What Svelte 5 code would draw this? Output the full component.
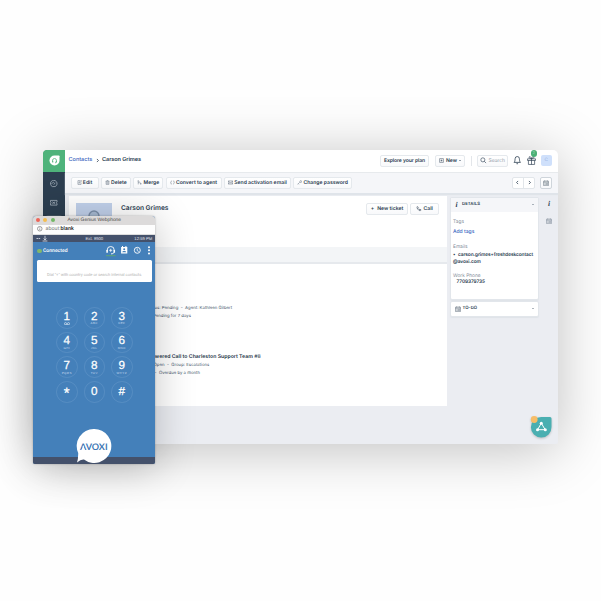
<script>
  const actions = [
    { label: 'Edit', icon: 'edit', w: 28 },
    { label: 'Delete', icon: 'trash', w: 30.5 },
    { label: 'Merge', icon: 'merge', w: 30 },
    { label: 'Convert to agent', icon: 'convert', w: 56 },
    { label: 'Send activation email', icon: 'mail', w: 67.5 },
    { label: 'Change password', icon: 'key', w: 58.5 }
  ];
  const keys = [
    ['1', ''], ['2', 'ABC'], ['3', 'DEF'],
    ['4', 'GHI'], ['5', 'JKL'], ['6', 'MNO'],
    ['7', 'PQRS'], ['8', 'TUV'], ['9', 'WXYZ'],
    ['*', null], ['0', null], ['#', null]
  ];
  const paths = {
    edit: 'M10 2H3v12h10V8 M6 10l1-3 6-6 2 2-6 6z',
    trash: 'M2 4h12 M6 4V2h4v2 M3.5 4v10h9V4 M6.5 7v5 M9.5 7v5',
    merge: 'M4 14V2 M2 4l2-2 2 2 M4 8c0-2 8-2 8 5 M10 11l2 3 2-3',
    convert: 'M6 2.5A6 6 0 0 0 5 13l-2 1 M10 13.5A6 6 0 0 0 11 3l2-1',
    mail: 'M1 3h14v10H1z M1 4l7 5 7-5 M1 13l5-5 M15 13l-5-5',
    key: 'M2 14l7-7 M4 12l2 2 M9 5a3 3 0 1 1 3 3 3 3 0 0 1-3-3',
    plusbox: 'M2 2h12v12H2z M8 5v6 M5 8h6',
    search: 'M12 7a5 5 0 1 1-10 0 5 5 0 0 1 10 0z M10.5 10.5L15 15',
    bell: 'M2 12h12c-2-2-1.500-4-2-7a4 4 0 0 0-8 0c-.5 3 0 5-2 7z M6.5 14.5h3',
    gift: 'M1 5h14v3H1z M2.5 8v7h11V8 M8 5v10 M8 5C3 5 3 1 5 1s3 4 3 4 1-4 3-4 2 4-3 4',
    phone: 'M3 2c-2 3 4 12 9 12l2-2-3-3-2 1.5L5.5 7 7 5 5 2z M10 11h5',
    cal: 'M1.5 3h13v12h-13z M1.5 6h13 M4.5 1v3 M11.5 1v3 M4 9h3 M9 9h3 M4 12h3 M9 9v3h3V9',
    gauge: 'M5 14A7 7 0 1 1 11 14z M8 10l3-4 M4 9a4 4 0 0 1 5-4',
    ticket: 'M1 3h14v3.5a1.5 1.5 0 0 0 0 3V13H1V9.5a1.5 1.5 0 0 0 0-3z M5 6l6 4 M11 6l-6 4',
    left: 'M10 3L5 8l5 5',
    right: 'M6 3l5 5-5 5'
  };
</script>

{#snippet icon(name, size, sw = 1.5)}
  <svg class="ic" width={size} height={size} viewBox="0 0 16 16" fill="none" stroke="currentColor" stroke-width={sw}>
    <path d={paths[name]} />
  </svg>
{/snippet}

<div class="stage">
  <section class="desk">
    <nav class="rail">
      <div class="brand">
        <svg width="11" height="11" viewBox="0 0 22 22">
          <path d="M11 1h8.5a1.5 1.5 0 0 1 1.5 1.5V11A10 10 0 1 1 11 1z" fill="#fff" />
          <path d="M7 13.5v-2.500a4 4 0 0 1 8 0v2.500M14.500 14.500l-2.500 1.500" fill="none" stroke="#4fb37b" stroke-width="1.5" />
          <path d="M7.500 11.500v3.500M14.500 11.500v3.500" stroke="#4fb37b" stroke-width="2" />
        </svg>
      </div>
      <div class="railicons">
        {@render icon('gauge', 7.5, 1.7)}
        {@render icon('ticket', 7.5, 1.7)}
        <div class="active"></div>
      </div>
    </nav>

    <div class="page">
      <header class="top">
        <span class="crumb">Contacts</span>
        <span class="sep">{@render icon('right', 5, 2.5)}</span>
        <span class="current">Carson Grimes</span>
        <div class="tools">
          <div class="btn explore"><span>Explore your plan</span></div>
          <div class="btn new">{@render icon('plusbox', 5)}<span>New</span><i class="caret"></i></div>
          <div class="vline"></div>
          <div class="btn search">{@render icon('search', 6.5)}<span>Search</span></div>
          <div class="bell">{@render icon('bell', 8.5, 1.5)}</div>
          <div class="gift">{@render icon('gift', 9, 1.2)}<b>2</b></div>
          <div class="me">C</div>
        </div>
      </header>

      <div class="bar">
        {#each actions as a}
          <div class="btn act" style="width:{a.w}px">{@render icon(a.icon, 5)}<span>{a.label}</span></div>
        {/each}
        <div class="pager"><div>{@render icon('left', 5, 2.5)}</div><div>{@render icon('right', 5, 2.5)}</div></div>
        <div class="btn calbtn">{@render icon('cal', 6)}</div>
      </div>

      <div class="body">
        <main>
          <div class="profile">
            <div class="photo"><svg width="12" height="12" viewBox="0 0 12 12"><circle cx="6" cy="6" r="5" fill="#a9bcd5" stroke="#7b8fa9" stroke-width="1.4" /></svg></div>
            <h1>Carson Grimes</h1>
            <div class="btn ticket"><span class="plus">+</span><span>New ticket</span></div>
            <div class="btn call">{@render icon('phone', 5.5)}<span>Call</span></div>
          </div>
          <div class="tabs"></div>
          <div class="feed">
            <p class="l1">tus: Pending&nbsp; - &nbsp;Agent: Kathleen Gilbert</p>
            <p class="l2">Pending for 7 days</p>
            <p class="l3">swered Call to Charleston Support Team <span>#8</span></p>
            <p class="l4">Open&nbsp; - &nbsp;Group: Escalations</p>
            <p class="l5">-&nbsp; Overdue by a month</p>
          </div>
        </main>
        <aside>
          <div class="card">
            <div class="head"><i class="info">i</i><span>DETAILS</span><div class="up"></div></div>
            <div class="fields">
              <p class="lab tags">Tags</p>
              <p class="add">Add tags</p>
              <p class="lab em">Emails</p>
              <p class="mail"><span class="dot">•</span><span>carson.grimes+freshdeskcontact</span></p>
              <p class="mail m2">@avoxi.com</p>
              <p class="lab wp">Work Phone</p>
              <p class="num">7709379735</p>
            </div>
          </div>
          <div class="card todo">
            {@render icon('cal', 6)}<span>TO-DO</span><div class="up down"></div>
          </div>
        </aside>
        <div class="dock"><i class="info">i</i>{@render icon('cal', 6)}</div>
      </div>
    </div>

    <div class="fab">
      <svg width="23" height="23" viewBox="0 0 23 23">
        <path d="M11.5 2H20a1.5 1.5 0 0 1 1.5 1.5V12A10.3 10.3 0 1 1 11.5 2z" fill="#4aafb1" />
        <path d="M11.3 8.2L7.6 14.7h7.6z" fill="none" stroke="#fff" stroke-width="1" />
        <circle cx="11.3" cy="8.2" r="1.5" fill="#fff" /><circle cx="7.5" cy="14.7" r="1.5" fill="#fff" /><circle cx="15.3" cy="14.7" r="1.5" fill="#fff" />
        <circle cx="4.2" cy="4.5" r="3.4" fill="#f7bd68" />
      </svg>
    </div>
  </section>

  <section class="phone">
    <div class="title"><i style="background:#ed6559"></i><i style="background:#f4bd50"></i><i style="background:#73b766"></i><span>Avoxi Genius Webphone</span></div>
    <div class="url">
      <svg width="5.5" height="5.5" viewBox="0 0 12 12" fill="none" stroke="#555" stroke-width="1.2"><circle cx="6" cy="6" r="5" /><path d="M6 3v1.2M6 5.2v4" /></svg>
      <span>about:<b>blank</b></span>
    </div>
    <div class="status">
      <svg width="14" height="7" viewBox="0 0 14 7" fill="none" stroke="#dfe5ee" stroke-width="0.8"><path d="M0.5 3.5h4" stroke-dasharray="1.6 .5" /><path d="M9 0.8v4M7.6 3.5L9 5l1.4-1.5M6.6 6h4.8" /></svg>
      <span class="ext">Ext. 8900</span><span class="time">12:59 PM</span>
    </div>
    <div class="conn">
      <i class="led"></i><span>Connected</span>
      <svg width="44" height="12" viewBox="0 0 44 12" fill="none" stroke="#fff" stroke-width="1">
        <path d="M1.2 6.3V5a3.5 3.5 0 0 1 7 0v1.3M8 7.500q-.8 1.400-3 1.400" stroke-width=".9" />
        <path d="M1.1 5v2.700M8.300 5v2.700" stroke-width="1.5" /><path d="M4.700 3.800v3M3.200 5.300h3" stroke-width=".8" />
        <path d="M0 10.7h9.600" stroke="#67ae62" stroke-width=".8" />
        <path d="M15.1 2h6.200v6.500h-6.200z" fill="#fff" stroke="none" /><path d="M16.500 1v2M19.900 1v2" /><circle cx="18.2" cy="4.2" r="1" fill="#4480ba" stroke="none" /><path d="M16.2 7.300c0-1.900 4-1.900 4 0z" fill="#4480ba" stroke="none" />
        <circle cx="31.3" cy="5.3" r="3" stroke-width=".9" /><path d="M31.2 3.400v2.200l1.500 .9" stroke-width=".8" />
        <g fill="#fff" stroke="none"><circle cx="43" cy="2.200" r="1" /><circle cx="43" cy="5.300" r="1" /><circle cx="43" cy="8.400" r="1" /></g>
      </svg>
    </div>
    <div class="dial">Dial "+" with country code or search internal contacts</div>
    <div class="pad">
      {#each keys as [n, t]}
        <div class="key" class:solo={t === null}>
          <strong class:star={n === '*'}>{n}</strong>
          {#if t}<small>{t}</small>{/if}
          {#if t === ''}<svg width="6" height="3.6" viewBox="0 0 6 3.6" fill="none" stroke="#dce8f4" stroke-width=".7"><circle cx="1.5" cy="1.7" r="1.1" /><circle cx="4.5" cy="1.7" r="1.1" /><path d="M1.5 2.9h3" /></svg>{/if}
        </div>
      {/each}
    </div>
    <div class="foot">
      <svg class="bubble" width="36" height="36" viewBox="0 0 36 36">
        <path d="M18 1A17 17 0 1 1 8 31.5Q5 31 1 34.5Q2.300 31 2.200 25A17 17 0 0 1 18 1z" fill="#fff" />
        <text x="4" y="21.600" textLength="27.6" lengthAdjust="spacingAndGlyphs" font-size="9" font-weight="700" fill="#3d76b4">AVOXI</text>
        <path d="M5.700 21.800L7.300 17.300 8.900 21.800z" fill="#fff" />
      </svg>
    </div>
  </section>
</div>

<style>
  :global(body) { background: #fefefe; overflow: hidden; }
  * { box-sizing: border-box; }
  p, h1 { margin: 0; }
  .stage { position: relative; width: 601px; height: 601px; overflow: hidden; background: #fefefe; font-family: Inter, "Liberation Sans", sans-serif; color: #2b3d51; font-size: 5.3px; line-height: 1; white-space: nowrap; text-rendering: geometricPrecision; }
  .ic { display: block; flex: none; }
  .desk { position: absolute; left: 43px; top: 150px; width: 515px; height: 294px; display: flex; border-radius: 5px 5px 2px 2px; background: #ebedf2; box-shadow: 0 6px 56px rgba(0,0,0,.25); }
  .rail { width: 22px; background: #2c3e50; border-radius: 5px 0 0 2px; }
  .brand { height: 22px; background: #4fb37b; border-radius: 4px 0 0 0; display: flex; align-items: center; justify-content: center; padding-bottom: 1.5px; }
  .railicons { display: flex; flex-direction: column; align-items: center; padding-top: 8px; color: #a3afba; gap: 11.5px; }
  .active { width: 16px; height: 12px; margin-top: -3.5px; background: #475868; border-radius: 2px; }
  .page { flex: 1; display: flex; flex-direction: column; }
  .top { height: 22px; background: #fff; border-radius: 0 5px 0 0; display: flex; align-items: center; padding: 0 6px 1px 3.5px; font-size: 5.6px; font-weight: 600; }
  .crumb { color: #3c67c0; width: 24px; letter-spacing: -.05px; font-weight: 500; }
  .sep { width: 9.5px; padding-left: 2.5px; }
  .current { letter-spacing: -.1px; }
  .tools { margin-left: auto; display: flex; align-items: center; }
  .btn { display: flex; align-items: center; justify-content: center; gap: 1px; height: 12px; background: linear-gradient(#fff, #f8f9fb); border: 1px solid #e5e9ed; border-radius: 2px; font-size: 5.1px; font-weight: 600; flex: none; }
  .btn span { padding-top: 1.5px; }
  .explore { width: 49px; letter-spacing: -.1px; }
  .new { width: 30px; margin-left: 6px; gap: 2px; }
  .caret { border: 1.2px solid transparent; border-top: 1.6px solid #34475a; border-bottom: 0; }
  .vline { width: 1px; height: 10px; background: #e3e6ea; margin-left: 6px; }
  .search { width: 31px; margin-left: 5px; gap: 2px; font-weight: 400; }
  .search span { color: #97a1ad; letter-spacing: -.1px; }
  .bell { margin-left: 5.3px; }
  .gift { position: relative; margin-left: 4.7px; }
  .gift b { position: absolute; left: 4px; top: -6px; width: 6.5px; height: 6.5px; border-radius: 50%; background: #4cb077; color: #8fd0ab; font-size: 4px; line-height: 6.5px; text-align: center; font-weight: 400; }
  .me { width: 11.5px; height: 11.5px; margin-left: 5px; border-radius: 2px; background: #cfe0fb; color: #8fabdc; font-size: 4.5px; font-weight: 400; display: flex; align-items: center; justify-content: center; padding-top: 1px; }
  .bar { height: 21.5px; background: #f5f6f9; border-top: 1px solid #e7eaed; border-bottom: 1px solid #dfe4ea; box-shadow: 0 1px 1px #e0e4e9; display: flex; align-items: center; gap: 2.2px; padding: 0 6px 0 5.5px; }
  .act .ic { opacity: .8; }
  .pager { margin-left: auto; display: flex; width: 23.5px; height: 12px; background: #fff; border: 1px solid #e2e6ea; border-radius: 2px; }
  .pager div { flex: 1; display: flex; align-items: center; justify-content: center; }
  .pager div + div { border-left: 1px solid #e2e6ea; }
  .calbtn { width: 12px; margin-left: 2.5px; border-color: #cfd5db; color: #66737f; }
  .body { flex: 1; display: flex; padding: 2.5px 0 0 4px; }
  main { width: 378px; }
  .profile { height: 51px; background: #fff; display: flex; align-items: flex-start; padding: 7px 8px 0 6.5px; }
  .photo { width: 36px; height: 36px; background: #c2d2ec; display: flex; justify-content: center; padding-top: 7px; }
  h1 { font-size: 6.6px; font-weight: 600; margin: 1px auto 0 9.5px; line-height: 8px; }
  .ticket { width: 42px; gap: 3px; }
  .call { width: 29px; margin-left: 2px; gap: 2px; }
  .tabs { height: 17px; background: #f3f5f7; border-bottom: 2px solid #e6e9ed; }
  .feed { height: 141.5px; background: #fff; padding: 41.5px 0 0 83.5px; font-size: 4.3px; color: #45566a; }
  .feed p { height: 6px; line-height: 6px; }
  .feed .l1 { margin-left: .5px; }
  .feed .l2 { margin: 2px 0 0 .5px; }
  .feed .l3 { font-size: 5.2px; font-weight: 600; color: #25374a; margin: 34px 0 0 -.5px; }
  .l3 span { font-weight: 400; }
  .feed .l4 { margin: 3.5px 0 0 1px; }
  .feed .l5 { margin: 2px 0 0 2px; }
  aside { margin-left: 2.5px; width: 89.5px; padding-top: .5px; }
  .card { background: #fff; border: 1px solid #e2e6eb; border-radius: 2px; height: 103px; box-shadow: 0 1px 1px #dfe3e8; }
  .head, .todo { font-size: 4.3px; font-weight: 600; display: flex; align-items: center; letter-spacing: .05px; }
  .head span, .todo span { padding-top: 1.5px; }
  .head { height: 14px; background: #f5f6f9; padding: 0 4px 0 5px; }
  .info { font-family: "Liberation Serif", serif; font-weight: 700; font-size: 7.5px; line-height: 7px; font-style: italic; letter-spacing: 0; }
  .head .info { width: 6.5px; }
  .up { margin-left: auto; border: 1.4px solid transparent; border-bottom: 1.6px solid #5e6d7c; border-top: 0; }
  .down { transform: rotate(180deg); }
  .fields { padding: 7.5px 0 0 2.5px; font-size: 4.8px; font-weight: 500; }
  .fields p { height: 6px; line-height: 6px; }
  .lab { color: #7f8b98; font-weight: 400; }
  .add { margin-top: 4px; color: #3663c0; font-size: 5px; }
  .em { margin-top: 8.5px; }
  .fields .mail { margin-top: 2.5px; font-weight: 600; letter-spacing: -.08px; display: flex; }
  .dot { width: 5px; }
  .fields .m2 { margin-top: .5px; }
  .wp { margin-top: 8px; }
  .fields .num { font-weight: 600; padding-left: 3.5px; margin-top: .5px; letter-spacing: -.08px; }
  .todo { height: 15.5px; margin-top: 1.5px; padding: 0 4px 0 4px; gap: 2px; }
  .todo .ic { color: #5c6b79; }
  .dock { flex: 1; display: flex; flex-direction: column; align-items: center; padding: 3.5px 0 0 1px; gap: 11.5px; }
  .dock .ic { color: #7c8997; }
  .fab { position: absolute; left: 487px; top: 264.5px; filter: drop-shadow(0 1px 1px rgba(0,0,0,.2)); }

  .phone { position: absolute; left: 33px; top: 216px; width: 122.3px; height: 248px; border-radius: 3px 3px 2px 2px; background: #4480ba; box-shadow: 0 4px 40px rgba(0,0,0,.24), 0 0 2px rgba(0,0,0,.3); display: flex; flex-direction: column; font-family: Roboto, sans-serif; }
  .title { height: 8.5px; flex: none; background: #dcdada; border-radius: 3px 3px 0 0; display: flex; align-items: center; padding-left: 3px; gap: 3.3px; color: #444; font: 4.900px "Liberation Sans", sans-serif; }
  .title i { width: 4px; height: 4px; border-radius: 50%; }
  .title span { margin-left: 9.5px; padding-top: 1px; }
  .url { height: 10px; background: #fdfdfd; border-bottom: 1px solid #ddd; display: flex; align-items: center; padding-left: 4px; gap: 3px; color: #777; font-size: 5.4px; }
  .url span { padding-top: 2px; }
  .url b { font-weight: 500; color: #222; }
  .status { height: 7.5px; background: #44516b; display: flex; align-items: center; padding: 0 3px; color: #e0e5ee; font: 4.2px "Liberation Sans", sans-serif; }
  .ext { margin-left: 35.5px; }
  .time { margin-left: auto; }
  .conn { height: 18px; display: flex; align-items: center; padding: 0 5.8px 0 4px; color: #fff; font-size: 5.1px; }
  .conn span { padding-top: 2px; font-weight: 500; }
  .led { width: 4.5px; height: 4.5px; border-radius: 50%; background: #82b86a; margin-right: 1.5px; }
  .conn svg { margin-left: auto; }
  .dial { height: 22px; margin: 0 3.7px; background: #fff; border-radius: 1.5px; color: #b5b5b5; font-size: 4.1px; text-align: center; padding-top: 13px; line-height: 5px; letter-spacing: -.03px; }
  .pad { display: grid; grid-template-columns: repeat(3, 21.5px); grid-auto-rows: 21.5px; gap: 3.2px 6px; margin: 25px 0 0 23px; flex: 1; }
  .key { border: 1px solid rgba(150,187,222,.22); border-radius: 50%; display: flex; flex-direction: column; align-items: center; color: #fff; padding-top: 2.6px; }
  .key strong { font: 500 11.7px/12px "Liberation Sans", sans-serif; -webkit-text-stroke: .25px #fff; height: 11.500px; }
  .key small { font: 3px/4px "Liberation Sans", sans-serif; letter-spacing: .4px; color: #c5daef; margin-top: -.7px; }
  .key svg { margin-top: -.5px; }
  .key.solo { padding-top: 4px; }
  .key .star { font-size: 15px; line-height: 15px; }
  .foot { position: relative; height: 7px; flex: none; background: #44516b; border-radius: 0 0 2px 2px; }
  .bubble { position: absolute; left: 43.3px; top: -29px; font-family: Lato, sans-serif; }
</style>
